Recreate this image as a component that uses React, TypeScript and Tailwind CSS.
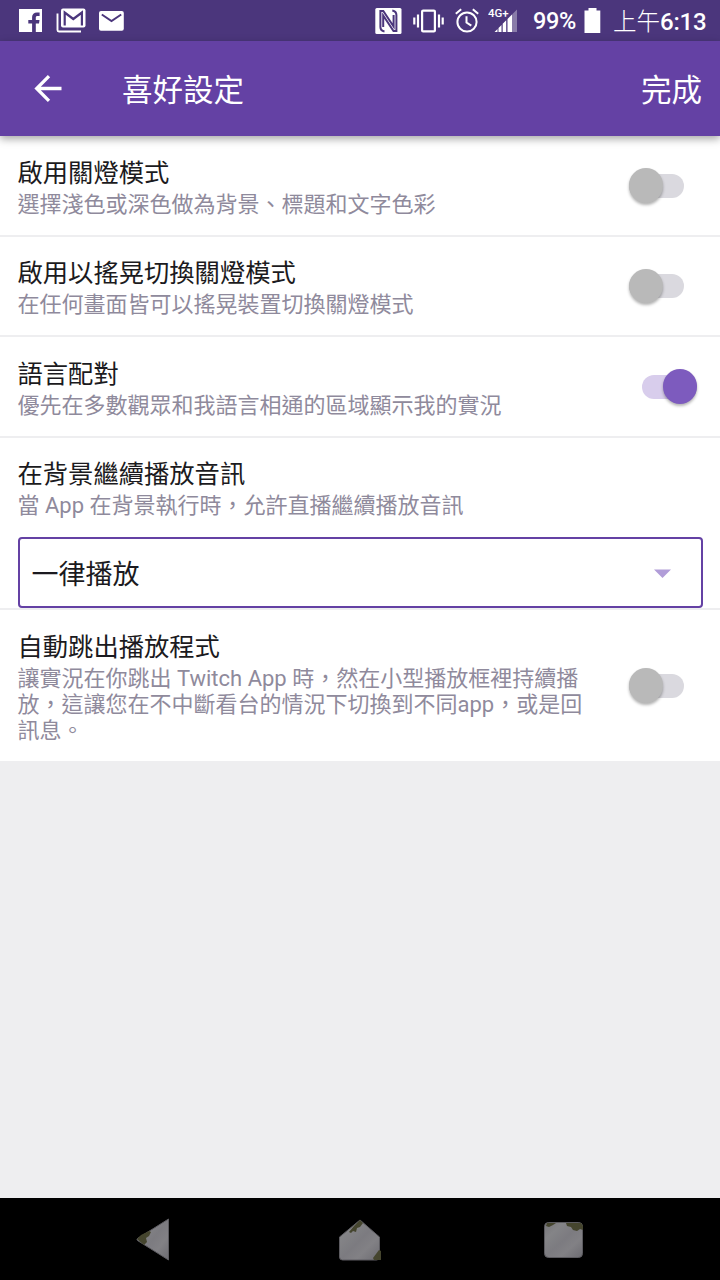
import clsx from "clsx";

interface ISwitchProps {
  checked?: boolean;
  label: string;
}

interface ISettingTextProps {
  title: string;
  description: string;
}

interface ISettingRowProps extends ISettingTextProps {
  checked?: boolean;
  rowClass?: string;
}

const StatusBar = (): JSX.Element => {
  return (
    <div className="flex h-[41px] items-center bg-[#4b367c] text-white">
      <svg className="ml-[19px] h-[23px] w-[23px]" viewBox="0 0 23 23">
        <path
          fill="currentColor"
          d="M0 0h23v23h-6.200v-8.500h3.200l.5-3.600h-3.700V8.600c0-1 .4-1.700 1.900-1.700h1.900V3.600c-.5-.1-1.400-.2-2.600-.2-2.900 0-4.900 1.700-4.900 4.600v2.900H9.300v3.600h3.800V23H0z"
        />
      </svg>
      <svg className="ml-[14px] h-[25px] w-[30px]" viewBox="0 0 30 25">
        <path
          fill="none"
          stroke="currentColor"
          strokeWidth="1.900"
          d="M1.500 5.500v16.500a1.500 1.500 0 0 0 1.500 1.500h22"
        />
        <rect x="5" y="0.500" width="24.500" height="19" rx="2" fill="currentColor" />
        <path
          fill="none"
          stroke="#4b367c"
          strokeWidth="2.200"
          d="M8.700 17.500V4.500l8.600 6.500 8.600-6.500v13"
        />
      </svg>
      <svg className="ml-[13px] h-[20px] w-[25px]" viewBox="0 0 25 20">
        <rect width="24.800" height="19.800" rx="2" fill="currentColor" />
        <path
          fill="none"
          stroke="#4b367c"
          strokeWidth="2"
          d="M2.800 3.500l9.700 6.500 9.700-6.500"
        />
      </svg>

      {/* nfc */}
      <svg className="ml-[251px] h-[26px] w-[27px]" viewBox="0 0 27 26">
        <rect x="0.300" width="26.200" height="26" rx="1.500" fill="currentColor" />
        <g fill="none" stroke="#4b367c" strokeWidth="2">
          <path d="M9.500 23.500C6.800 23 5.400 22 5.400 19V3h2.900L18.600 18.500V7" />
          <path d="M17.300 2.500c2.700.5 4.100 1.500 4.100 4.500v16h-2.900L8.200 7.500V19" />
        </g>
      </svg>
      {/* vibrate */}
      <svg className="ml-[11px] h-[24px] w-[31px]" viewBox="0 0 31 24">
        <g fill="none" stroke="currentColor" strokeWidth="2.200">
          <rect x="9.100" y="1.600" width="12.800" height="20.800" rx="1" />
          <path d="M1.300 8.500v7M5 5.500v13M26 5.500v13M29.700 8.500v7" />
        </g>
      </svg>
      {/* alarm */}
      <svg className="ml-[11px] h-[25px] w-[24px]" viewBox="0 0 24 25">
        <g fill="none" stroke="currentColor" strokeWidth="2">
          <circle cx="12" cy="14" r="9.600" />
          <path d="M11.500 8.300v6.200l4.800 3.200M.8 5.700l5.400-4.500M23.200 5.700l-5.400-4.500" />
        </g>
      </svg>
      {/* signal */}
      <svg className="ml-[9px] h-[28px] w-[30px]" viewBox="0 0 30 28">
        <path
          fill="currentColor"
          d="M6.500 25L9.500 22v3zM10.500 21L13.500 18V25h-3zM14.700 16.800L18.200 13.300V25h-3.500zM19.500 12L24 7.500V25h-4.500z"
        />
        <path fill="currentColor" opacity="0.350" d="M24 7.500L29 2.500V25H24z" />
        <text
          x="0"
          y="10"
          fill="currentColor"
          className="font-[Roboto] text-[11.500px] font-medium"
        >
          4G+
        </text>
      </svg>
      <span className="ml-[15px] w-[44px] pt-[3px] font-[Roboto] text-[23.500px] leading-none font-medium tracking-[-0.300px]">
        99%
      </span>
      <svg className="ml-[7px] h-[25px] w-[17px]" viewBox="0 0 17 25">
        <path fill="currentColor" d="M4.500 0h8v2.500H16.300V25H.5V2.500h4z" />
      </svg>
      <span className="ml-[12px] flex items-center leading-none whitespace-nowrap">
        <span className="font-['Noto_Sans_CJK_TC',sans-serif] text-[23.500px] font-light">
          上午
        </span>
        <span className="pt-[2px] font-[Roboto] text-[24px] font-medium tracking-[-0.200px]">
          6:13
        </span>
      </span>
    </div>
  );
};

const Header = (): JSX.Element => {
  return (
    <header className="relative z-10 flex h-[95px] items-center bg-[#6441a4] pr-[18px] text-[30.500px] text-white shadow-[0_3px_8px_rgba(0,0,0,0.350)]">
      <button type="button" aria-label="返回" className="ml-[34px]">
        <svg className="h-[28px] w-[28px]" viewBox="0 0 28 28">
          <path
            fill="none"
            stroke="currentColor"
            strokeWidth="3.300"
            d="M27.500 13.500H3M15 1.200L2.700 13.500 15 25.800"
          />
        </svg>
      </button>
      <h1 className="ml-[60px] pt-[5px] leading-none">喜好設定</h1>
      <button type="button" className="ml-auto pt-[5px] leading-none">
        完成
      </button>
    </header>
  );
};

const Switch = ({ checked, label }: ISwitchProps): JSX.Element => {
  return (
    <button
      type="button"
      role="switch"
      aria-checked={!!checked}
      aria-label={label}
      className={clsx(
        "flex h-6 w-[55.500px] shrink-0 items-center rounded-full",
        checked ? "mr-[23px] justify-end bg-[#d8cdec]" : "mr-9 bg-[#dad9df]"
      )}
    >
      <span
        className={clsx(
          "h-[34.500px] w-[34.500px] shrink-0 rounded-full shadow-[0_2px_3px_rgba(0,0,0,0.300)]",
          checked ? "bg-[#7d5bbe]" : "bg-[#b9b9b9]"
        )}
      />
    </button>
  );
};

const SettingText = ({ title, description }: ISettingTextProps): JSX.Element => {
  return (
    <div className="w-[570px]">
      <h2 className="text-[25.300px] leading-[30px] text-[#1b1a20]">{title}</h2>
      <p className="mt-[3px] text-[22px] leading-[26px] text-[#8f8a9c]">
        {description}
      </p>
    </div>
  );
};

const SettingRow = ({
  title,
  description,
  checked,
  rowClass,
}: ISettingRowProps): JSX.Element => {
  return (
    <div
      className={clsx(
        "flex items-center justify-between pl-[17.500px]",
        rowClass
      )}
    >
      <div className="pt-[5px]">
        <SettingText title={title} description={description} />
      </div>
      <Switch checked={checked} label={title} />
    </div>
  );
};

const NavBar = (): JSX.Element => {
  return (
    <nav className="flex h-[82px] items-start bg-black">
      <svg className="h-[82px] w-full" viewBox="0 0 720 82">
        <defs>
          <linearGradient id="stone" x1="0" y1="0" x2="1" y2="1">
            <stop offset="0" stopColor="#77767a" />
            <stop offset="0.250" stopColor="#848487" />
            <stop offset="0.500" stopColor="#7c7b80" />
            <stop offset="0.700" stopColor="#828185" />
            <stop offset="1" stopColor="#6d6c72" />
          </linearGradient>
        </defs>
        <g fill="url(#stone)" stroke="#5c5b60" strokeWidth="1">
          <path d="M168.500 21v41L137.500 42.500q-1-1 0-2z" />
          <path d="M360 22l19.500 17v20q0 3-3 3h-34q-3 0-3-3V39z" />
          <rect x="544.500" y="24.500" width="38" height="35" rx="4" />
        </g>
        <g fill="#45452e">
          <path d="M137 41l4-4 8-4 2 1-2 4-3 2 1 4-3 3z" />
          <path d="M349 34l5-6 4-4 2-2 3 3-3 4-3 1-1 4-3-1-2 2z" />
          <path d="M373 60l3-4 3-4 2 1v9h-7z" />
          <path d="M547 25h9l-3 2-4 2-3-1z" />
          <path d="M566 25h15l2 3v4l-3-1-3 2-4-1-2-3-4-1z" />
        </g>
      </svg>
    </nav>
  );
};

const App = (): JSX.Element => {
  return (
    <div
      lang="zh-Hant"
      className="flex h-[1280px] w-[720px] flex-col overflow-hidden bg-[#eeeef0] font-[Roboto,'Noto_Sans_CJK_TC',sans-serif]"
    >
      <StatusBar />
      <Header />
      <main className="flex-1">
        <div className="bg-white">
          <SettingRow
            title="啟用關燈模式"
            description="選擇淺色或深色做為背景、標題和文字色彩"
            rowClass="h-[101px] border-b-2 border-[#eeeef0]"
          />
          <SettingRow
            title="啟用以搖晃切換關燈模式"
            description="在任何畫面皆可以搖晃裝置切換關燈模式"
            rowClass="h-[100px] border-b-2 border-[#eeeef0]"
          />
          <SettingRow
            title="語言配對"
            description="優先在多數觀眾和我語言相通的區域顯示我的實況"
            checked
            rowClass="h-[101px] border-b-2 border-[#eeeef0]"
          />
          <div className="h-[172px] border-b-2 border-[#eeeef0] px-[17.500px] pt-[22px]">
            <SettingText
              title="在背景繼續播放音訊"
              description="當 App 在背景執行時，允許直播繼續播放音訊"
            />
            <button
              type="button"
              className="mt-[18px] flex h-[71px] w-full items-center justify-between rounded border-2 border-[#6441a4] bg-white pr-[30px] pl-3 text-[27px] text-[#1b1a20]"
            >
              <span className="pt-[5px]">一律播放</span>
              <svg className="mt-px h-[9px] w-[17px]" viewBox="0 0 17 9">
                <path fill="#b19dd8" d="M0 .5h17L8.500 9z" />
              </svg>
            </button>
          </div>
          <SettingRow
            title="自動跳出播放程式"
            description="讓實況在你跳出 Twitch App 時，然在小型播放框裡持續播放，這讓您在不中斷看台的情況下切換到不同app，或是回訊息。"
            rowClass="h-[151px]"
          />
        </div>
      </main>
      <NavBar />
    </div>
  );
};

export default App;
